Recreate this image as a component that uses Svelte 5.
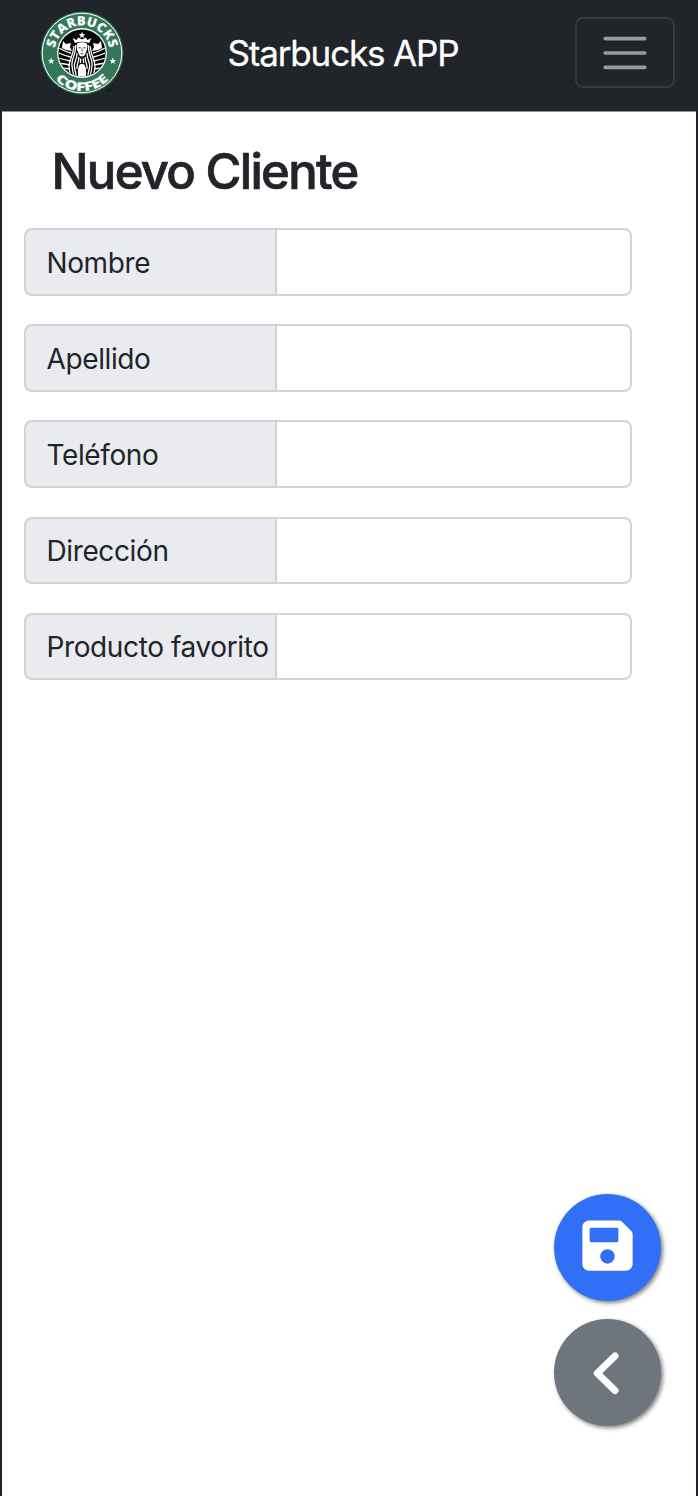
<script>
  const fields = ['Nombre', 'Apellido', 'Teléfono', 'Dirección', 'Producto favorito'];
  const locks = [0, 1, 2, 3, 4, 5];
  const star = 'M0 -3.4 L.9 -1.1 L3.3 -1 L1.4 .5 L2 2.9 L0 1.5 L-2 2.9 L-1.4 .5 L-3.3 -1 L-.9 -1.1z';
</script>

<div class="screen">
  <header>
    <svg class="logo" viewBox="-42 -42 84 84" role="img" aria-label="Starbucks Coffee">
      <defs>
        <path id="arc-top" d="M-27.2 6 A27.8 27.8 0 1 1 27.2 6" />
        <path id="arc-bottom" d="M-36.2 2 A36.2 36.2 0 0 0 36.2 2" />
        <clipPath id="disc"><circle r="23.4" /></clipPath>
      </defs>
      <circle r="41.4" fill="#35775a" />
      <circle r="39.8" fill="none" stroke="#fff" stroke-width="1" />
      <circle r="24.9" fill="#fff" />
      <circle r="23.6" fill="#060606" />
      <g clip-path="url(#disc)">
        <g fill="none" stroke="#fff" stroke-width="1.3">
          {#each locks as i}
            <path d="M{-11 - i * .3} {i * 4} q-5 -1 -12 {-5 + i}" />
            <path d="M{11 + i * .3} {i * 4} q5 -1 12 {-5 + i}" />
          {/each}
        </g>
        <path d="M-19 -12 l3 3 l5 -1 l-1 4 l2 4 l-6 -1 l-4 -2 z M19 -12 l-3 3 l-5 -1 l1 4 l-2 4 l6 -1 l4 -2 z" fill="#fff" />
        <path d="M-5 -9.5 Q0 -12 5 -9.5 Q6 -4 3.6 0 L2.6 2.4 Q0 4.6 -2.6 2.4 L-3.6 0 Q-6 -4 -5 -9.5z" fill="#fff" />
        <path d="M-3.8 24 Q-5 16 -2.6 12 Q0 9.5 2.6 12 Q5 16 3.8 24z" fill="#fff" />
        <g fill="none" stroke="#fff" stroke-width="1.3">
          <path d="M-6.2 -8 Q-6.5 -1 -8.5 4 T-10 13 T-8 24 M6.2 -8 Q6.5 -1 8.5 4 T10 13 T8 24" />
          <path d="M-5 0 Q-5 4 -6.6 8 T-7.4 15 T-5.6 24 M5 0 Q5 4 6.6 8 T7.4 15 T5.6 24" />
          <path d="M-3.2 4 Q-3 7 -4.2 10 T-5 16 M3.2 4 Q3 7 4.2 10 T5 16 M-1.2 5.5 L-1.6 10 M1.2 5.5 L1.6 10" />
          <path d="M-8 -7 Q-9 0 -11 5 T-13 13 T-11 24 M8 -7 Q9 0 11 5 T13 13 T11 24" />
        </g>
        <path d="M-3.6 -5.2h2.6M1 -5.2h2.6M0 -4.4v3M-1.4 .7h2.8" fill="none" stroke="#111" stroke-width=".8" />
      </g>
      <path d="M-7 -10 L-9.5 -15 L-5.4 -13 L-3.8 -15.6 L0 -13.6 L3.8 -15.6 L5.4 -13 L9.5 -15 L7 -10 Q0 -12.5 -7 -10z" fill="#fff" />
      <path d={star} fill="#fff" transform="translate(0 -17.8)" />
      <path d={star} fill="#fff" transform="translate(-30.8 8)" />
      <path d={star} fill="#fff" transform="translate(30.8 8)" />
      <text class="seal" text-anchor="middle"><textPath href="#arc-top" startOffset="50%" textLength="77" lengthAdjust="spacingAndGlyphs">STARBUCKS</textPath></text>
      <text class="seal lower" text-anchor="middle"><textPath href="#arc-bottom" startOffset="50%" textLength="60" lengthAdjust="spacingAndGlyphs">COFFEE</textPath></text>
      <text class="mark" x="27.4" y="39.8" text-anchor="middle">®</text>
    </svg>
    <span class="brand">Starbucks APP</span>
    <button class="toggler" aria-label="Menu">
      <svg viewBox="0 0 30 30"><path d="M4 7h22M4 15h22M4 23h22" stroke="#fff" stroke-opacity=".55" stroke-width="2" stroke-linecap="round" /></svg>
    </button>
  </header>

  <main>
    <h1>Nuevo Cliente</h1>
    <form>
      {#each fields as field, i}
        <div class="group">
          <label for="field-{i}">{field}</label>
          <input id="field-{i}" type="text" />
        </div>
      {/each}
    </form>
  </main>

  <div class="actions">
    <button class="round save" aria-label="Guardar">
      <svg viewBox="0 0 24 24" fill="#fff"><path fill-rule="evenodd" d="M16.1 3H5.4C4.1 3 3 4.1 3 5.4v13.2C3 19.9 4.1 21 5.4 21h13.2c1.3 0 2.4-1.1 2.4-2.4V7.9q0-.6-.4-1L17.1 3.4q-.4-.4-1-.4zM12 18.5a2.6 2.6 0 1 1 0-5.2 2.6 2.6 0 0 1 0 5.2zM5.6 6.2q0-.6.6-.6h9.1q.6 0 .6.6v4q0 .6-.6.6H6.2q-.6 0-.6-.6z" /></svg>
    </button>
    <button class="round back" aria-label="Volver">
      <svg viewBox="0 0 54 54"><path d="M34 11 L16.3 28.3 L34 45.6" fill="none" stroke="#fff" stroke-width="7" stroke-linecap="round" stroke-linejoin="round" /></svg>
    </button>
  </div>
</div>

<style>
  :global(body) { margin: 0; background: #fff; }
  * { box-sizing: border-box; }
  .screen {
    position: relative;
    height: 1496px;
    border: solid #212529;
    border-width: 0 2px;
    font-family: Inter, "Liberation Sans", sans-serif;
    color: #212529;
    overflow: hidden;
  }
  header {
    height: 112px;
    padding: 0 21px 6px 38px;
    display: flex;
    align-items: center;
    justify-content: space-between;
    background: #212529;
    border-bottom: 1px solid #909294;
  }
  .logo { width: 84px; height: 84px; }
  .seal { font: 800 13px "Open Sans", sans-serif; fill: #fff; }
  .lower { font-size: 12.4px; }
  .mark { font: 700 6px "Open Sans", sans-serif; fill: #0b0d0f; }
  .brand {
    margin-right: 13px;
    font-size: 35px;
    font-weight: 400;
    line-height: 52px;
    color: #fff;
    -webkit-text-stroke: .3px #fff;
    letter-spacing: -1.15px;
    white-space: nowrap;
  }
  .toggler {
    width: 100px;
    height: 71px;
    padding: 0;
    border: 2px solid #373a3e;
    border-radius: 8px;
    background: none;
    display: grid;
    place-items: center;
  }
  .toggler svg { width: 54px; height: 54px; fill: none; }
  h1 {
    margin: 0;
    padding: 31px 0 0 49.5px;
    font-size: 49px;
    font-weight: 500;
    line-height: 58px;
    -webkit-text-stroke: .7px #212529;
    letter-spacing: -1.7px;
    white-space: nowrap;
  }
  form {
    padding: 27px 64px 0 21.5px;
    display: flex;
    flex-direction: column;
    gap: 28.7px;
  }
  .group { display: flex; height: 67.5px; }
  label {
    width: 252.5px;
    padding: 1.6px 0 0 21px;
    display: flex;
    align-items: center;
    border: 2px solid #ced4da;
    border-right: 0;
    border-radius: 8px 0 0 8px;
    background: #e9ebef;
    font-size: 28px;
    letter-spacing: -0.38px;
    white-space: nowrap;
  }
  input {
    flex: 1;
    min-width: 0;
    border: 2px solid #ced4da;
    border-radius: 0 8px 8px 0;
    margin-left: -1px;
    padding: 0 22px;
    background: #fff;
    font: inherit;
    font-size: 28px;
  }
  .actions {
    position: absolute;
    right: 35px;
    bottom: 70.5px;
    display: flex;
    flex-direction: column;
    gap: 17.5px;
  }
  .round {
    width: 107px;
    height: 107px;
    padding: 0;
    border: 0;
    border-radius: 50%;
    display: grid;
    place-items: center;
    box-shadow: 2px 2px 4px rgba(0, 0, 0, .5);
  }
  .save { background: #316ff6; padding-bottom: 4px; }
  .back { background: #6e757c; }
  .save svg { width: 67px; height: 67px; }
  .back svg { width: 54px; height: 54px; }
</style>
